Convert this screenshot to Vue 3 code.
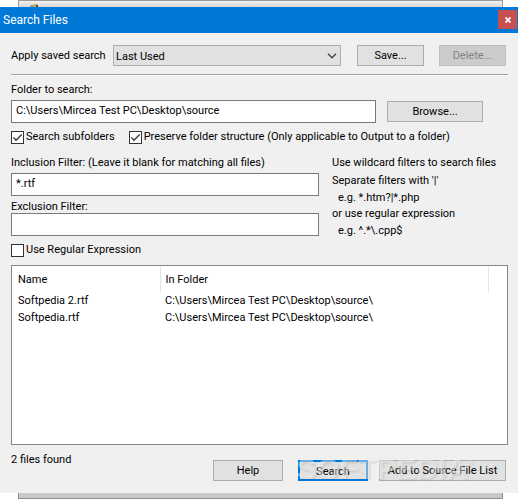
<template>
  <div class="desktop">
    <div class="back-top">
      <svg class="back-icon" width="10" height="3" viewBox="0 0 10 3">
        <path d="M1 1h4v2H0z" fill="#6d9fc4" />
        <path d="M4 0h3v3H3z" fill="#d9b437" />
        <path d="M6 1h2v2H6z" fill="#4a4a42" />
      </svg>
    </div>

    <form class="dialog" @submit.prevent>
      <header class="titlebar">
        <h1>Search Files</h1>
        <button type="button" class="close" aria-label="Close">
          <svg width="6" height="6" viewBox="0 0 6 6">
            <path d="M0.5 0.5L5.5 5.5M5.5 0.5L0.5 5.5" stroke="#fff" stroke-width="1.8" />
          </svg>
        </button>
      </header>

      <div class="body">
        <div class="saved">
          <label for="saved">Apply saved search</label>
          <div class="select-wrap">
            <select id="saved" v-model="saved">
              <option>Last Used</option>
            </select>
            <svg class="chevron" width="10" height="6" viewBox="0 0 10 6">
              <path d="M1 0.8L5 4.8L9 0.8" fill="none" stroke="#444" stroke-width="1.3" />
            </svg>
          </div>
          <button type="button" class="btn small">Save...</button>
          <button type="button" class="btn small" disabled>Delete...</button>
        </div>

        <hr />

        <label class="line" for="folder">Folder to search:</label>
        <div class="folder">
          <input id="folder" v-model="folder" class="field" type="text" />
          <button type="button" class="btn browse">Browse...</button>
        </div>

        <div class="checks">
          <label class="check"><input v-model="subfolders" type="checkbox" />Search subfolders</label>
          <label class="check">
            <input v-model="preserve" type="checkbox" />Preserve folder structure (Only applicable to Output to a folder)
          </label>
        </div>

        <div class="filters">
          <div class="filter-fields">
            <label class="line" for="include">Inclusion Filter: (Leave it blank for matching all files)</label>
            <input id="include" v-model="include" class="field" type="text" />
            <label class="line exclude" for="exclude">Exclusion Filter:</label>
            <input id="exclude" v-model="exclude" class="field" type="text" />
          </div>
          <div class="hints">
            <p>Use wildcard filters to search files</p>
            <p>Separate filters with '|'</p>
            <p class="eg">e.g. *.htm?|*.php</p>
            <p>or use regular expression</p>
            <p class="eg">e.g. ^.*\.cpp$</p>
          </div>
        </div>

        <label class="check regex"><input v-model="regex" type="checkbox" />Use Regular Expression</label>

        <div class="list">
          <table>
            <thead>
              <tr>
                <th class="name">Name</th>
                <th>In Folder</th>
                <th class="rest"></th>
              </tr>
            </thead>
            <tbody>
              <tr v-for="file in files" :key="file.name">
                <td>{{ file.name }}</td>
                <td colspan="2">{{ file.folder }}</td>
              </tr>
            </tbody>
          </table>
        </div>

        <footer class="footer">
          <span class="status">{{ files.length }} files found</span>
          <button type="button" class="btn help">Help</button>
          <button type="submit" class="btn search">Search</button>
          <button type="button" class="btn add">Add to Source File List</button>
          <div class="watermark">SOFTPEDIA<sup>®</sup></div>
        </footer>
      </div>
    </form>

    <div class="back-bottom"></div>
  </div>
</template>

<script setup>
import { ref } from "vue";

const saved = ref("Last Used");
const folder = ref("C:\\Users\\Mircea Test PC\\Desktop\\source");
const subfolders = ref(true);
const preserve = ref(true);
const include = ref("*.rtf");
const exclude = ref("");
const regex = ref(false);

const files = ref([
  {
    name: "Softpedia 2.rtf",
    folder: "C:\\Users\\Mircea Test PC\\Desktop\\source\\",
  },
  {
    name: "Softpedia.rtf",
    folder: "C:\\Users\\Mircea Test PC\\Desktop\\source\\",
  },
]);
</script>

<style>
body {
  margin: 0;
  background: #fff;
}
</style>

<style scoped>
* {
  box-sizing: border-box;
}

.desktop {
  font: 11px/18px Tahoma, Roboto, sans-serif;
  color: #000;
}

.back-top,
.back-bottom {
  margin: 0 15px 0 18px;
  border: 1px solid #9b9b9b;
}

.back-top {
  height: 7px;
  padding: 3px 0 0 11px;
  border-bottom: 0;
  background: linear-gradient(#f2f2f2, #d6d6d6);
}

.back-bottom {
  height: 6px;
  border-top: 0;
  border-color: #8f8f8f;
  background: #c8c8c8;
}

.back-icon {
  display: block;
}

.dialog {
  background: #f0f0f0;
}

.titlebar {
  display: flex;
  align-items: flex-start;
  justify-content: space-between;
  height: 26px;
  padding: 3px 1px 0 3px;
  background: #0078d7;
}

h1 {
  margin: 0;
  font: 12px/20px "Segoe UI", Roboto, sans-serif;
  color: #fff;
}

.close {
  display: flex;
  align-items: center;
  justify-content: center;
  width: 19px;
  height: 19px;
  padding: 0;
  border: 0;
  background: #c75050;
}

.body {
  padding: 12px 10px 12px 11px;
}

.saved {
  display: flex;
  align-items: center;
  padding-right: 2px;
}

.saved label {
  width: 102px;
  white-space: nowrap;
}

.select-wrap {
  position: relative;
  flex: 1;
  margin-right: 1px;
}

select {
  display: block;
  width: 100%;
  height: 21px;
  padding: 2px 2px 0;
  border: 1px solid #adadad;
  border-radius: 0;
  appearance: none;
  background: #e1e1e1;
  font: inherit;
  color: inherit;
}

.chevron {
  position: absolute;
  top: 8px;
  right: 4px;
  pointer-events: none;
}

.btn {
  height: 21px;
  padding: 1px 0 0;
  border: 1px solid #adadad;
  background: #e1e1e1;
  font: inherit;
  color: inherit;
  white-space: nowrap;
}

.btn:disabled {
  border-color: #bfbfbf;
  background: #ccc;
  color: #838383;
}

.small {
  width: 67px;
  margin-left: 15px;
}

hr {
  height: 2px;
  margin: 8px 0 5px;
  border: 0;
  border-top: 1px solid #a0a0a0;
  border-bottom: 1px solid #fff;
}

.line {
  display: block;
  height: 19px;
  white-space: nowrap;
}

.folder {
  display: flex;
  align-items: center;
  padding-right: 25px;
}

.field {
  display: block;
  width: 100%;
  min-width: 0;
  height: 23px;
  padding: 0 4px 2px;
  border: 1px solid #7a7a7a;
  background: #fff;
  font: inherit;
  color: inherit;
}

.folder .field {
  flex: 1;
}

.browse {
  width: 96px;
  margin-left: 11px;
}

.checks {
  display: flex;
  gap: 14px;
  padding: 5px 0 8px;
}

.check {
  display: flex;
  align-items: center;
  gap: 2px;
  white-space: nowrap;
}

.check input {
  width: 13px;
  height: 13px;
  margin: 0;
  border: 1px solid #333;
  appearance: none;
  background: #fff;
}

.check input:checked {
  background: #fff url("data:image/svg+xml,%3Csvg xmlns='http://www.w3.org/2000/svg' viewBox='0 0 11 11'%3E%3Cpath d='M1.3 5.4L4 8.2L9.7 2.5' fill='none' stroke='%23333' stroke-width='1.3'/%3E%3C/svg%3E");
}

.filters {
  display: flex;
}

.filter-fields {
  flex: 1;
}

.exclude {
  height: 17px;
  line-height: 22px;
}

.hints {
  width: 176px;
  margin-left: 13px;
}

.hints p {
  margin: 0;
  white-space: nowrap;
}

.hints .eg {
  padding-left: 6px;
  line-height: 15px;
}

.regex {
  padding: 3px 0 6px;
}

.list {
  height: 180px;
  border: 1px solid #828790;
  background: #fff;
}

table {
  width: 100%;
  border-collapse: collapse;
  table-layout: fixed;
  line-height: 16px;
}

th,
td {
  padding: 0 5px;
  text-align: left;
  font-weight: normal;
  white-space: nowrap;
}

th:first-child,
td:first-child {
  padding-left: 6px;
}

th {
  height: 26px;
  padding-top: 2px;
  border-right: 1px solid #e5e5e5;
}

td {
  height: 17px;
}

.name {
  width: 148px;
}

.rest {
  width: 19px;
  border-right: 0;
}

.footer {
  position: relative;
  display: flex;
  align-items: flex-end;
  height: 36px;
  padding-right: 2px;
}

.status {
  flex: 1;
  align-self: flex-start;
  padding-top: 6px;
}

.help,
.search {
  width: 70px;
  margin-right: 15px;
}

.search {
  margin-right: 11px;
  border: 2px solid #0078d7;
}

.add {
  width: 127px;
}

.watermark {
  position: absolute;
  right: 34px;
  bottom: -3px;
  font: bold 30px/30px "Liberation Sans", Arial, sans-serif;
  color: rgba(255, 255, 255, 0.45);
  text-shadow: 1px 1px 2px rgba(0, 0, 0, 0.12);
  pointer-events: none;
}

.watermark sup {
  font-size: 8px;
  line-height: 8px;
  vertical-align: 14px;
}
</style>
